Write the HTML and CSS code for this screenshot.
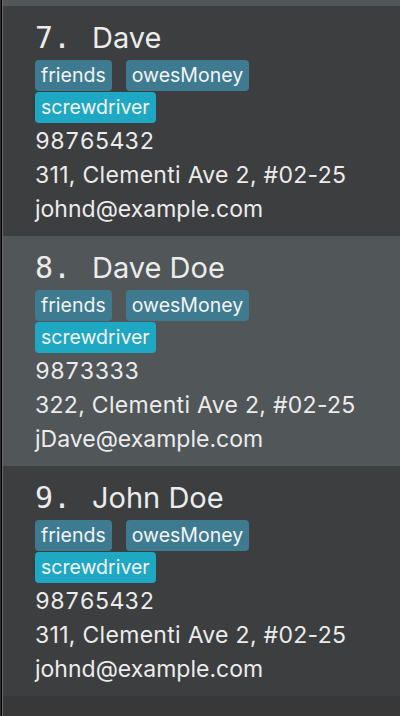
FILE: index.html
```html
<!DOCTYPE html>
<html>
<head>
<meta charset="utf-8">
<link rel="stylesheet" href="styles.css">
</head>
<body>
<div class="frame">
  <div class="list">
    <div class="prev-tail"></div>
    <div class="card even">
      <div class="header"><span class="index">7.</span><span class="name">Dave</span></div>
      <div class="tags">
        <span class="tag">friends</span>
        <span class="tag">owesMoney</span>
        <span class="tag hl">screwdriver</span>
      </div>
      <div class="line phone">98765432</div>
      <div class="line address">311, Clementi Ave 2, #02-25</div>
      <div class="line">johnd@example.com</div>
    </div>
    <div class="card odd">
      <div class="header"><span class="index">8.</span><span class="name">Dave Doe</span></div>
      <div class="tags">
        <span class="tag">friends</span>
        <span class="tag">owesMoney</span>
        <span class="tag hl">screwdriver</span>
      </div>
      <div class="line phone">9873333</div>
      <div class="line address">322, Clementi Ave 2, #02-25</div>
      <div class="line">jDave@example.com</div>
    </div>
    <div class="card even">
      <div class="header"><span class="index">9.</span><span class="name">John Doe</span></div>
      <div class="tags">
        <span class="tag">friends</span>
        <span class="tag">owesMoney</span>
        <span class="tag hl">screwdriver</span>
      </div>
      <div class="line phone">98765432</div>
      <div class="line address">311, Clementi Ave 2, #02-25</div>
      <div class="line">johnd@example.com</div>
    </div>
  </div>
</div>
</body>
</html>
```
FILE: styles.css
```css
html, body {
  margin: 0;
  padding: 0;
  background: #2e2e2e;
  height: 716px;
  overflow: hidden;
}
.frame {
  margin-left: 1px;
  border-left: 1px solid #000;
  height: 716px;
}
.list {
  border-left: 1px solid #6b6b6b;
  background: #383838;
  height: 716px;
}
.prev-tail {
  height: 6px;
  background: #515658;
}
.card {
  height: 230px;
  box-sizing: border-box;
  padding: 14px 0 0 32px;
  color: #ececec;
  font-family: Inter, "Open Sans", sans-serif;
}
.even { background: #3c3e3f; }
.odd { background: #515658; }
.header {
  display: flex;
  align-items: baseline;
  height: 36px;
  line-height: 36px;
}
.index {
  font-family: "DejaVu Sans Mono", monospace;
  font-size: 30px;
  width: 57px;
}
.name {
  font-size: 29px;
}
.tags {
  display: flex;
  flex-wrap: wrap;
  column-gap: 14px;
  row-gap: 1px;
  margin-top: 4px;
  width: 240px;
}
.tag {
  height: 31px;
  line-height: 31px;
  padding: 0 6px;
  font-size: 19.5px;
  color: #f4f4f4;
  background: #3e7b91;
  border-radius: 4px;
}
.tag.hl {
  background: #1fa8c4;
}
.line {
  font-size: 23px;
  line-height: 34px;
}
.phone {
  font-feature-settings: "tnum" 1;
}
.address {
  letter-spacing: 0.3px;
}
.tags + .line { margin-top: 1px; }
```
